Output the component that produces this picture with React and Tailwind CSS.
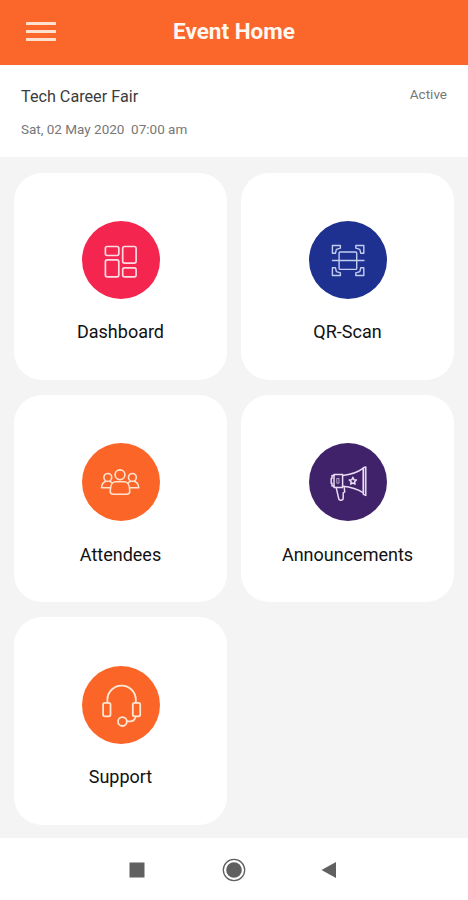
import clsx from "clsx"

function DashboardIcon() {
  return (
    <g strokeWidth="1.7">
      <rect x="23.4" y="25.5" width="13.4" height="9" rx="1.8" />
      <rect x="23.4" y="38.9" width="13.4" height="17" rx="1.8" />
      <rect x="40.7" y="25.5" width="13.4" height="16.6" rx="1.8" />
      <rect x="40.7" y="46.9" width="13.4" height="9" rx="1.8" />
    </g>
  )
}

function ScanIcon() {
  const corner = "M23.4 24.5h8v2.6l-4 1.2-1 4h-3z"
  return (
    <g strokeWidth="1.4" stroke="#c3cdf2">
      <path d={corner} />
      <path d={corner} transform="matrix(-1 0 0 1 78.2 0)" />
      <path d={corner} transform="matrix(1 0 0 -1 0 79)" />
      <path d={corner} transform="matrix(-1 0 0 -1 78.2 79)" />
      <rect x="30.1" y="31" width="17.6" height="17.4" rx="1" />
      <path d="M23.4 39.5h31.6" />
    </g>
  )
}

function PeopleIcon() {
  return (
    <g strokeWidth="1.6" stroke="#ffe3cf">
      <circle cx="38" cy="31.8" r="4.9" />
      <circle cx="25.8" cy="34.4" r="3.9" />
      <circle cx="50.4" cy="34.4" r="3.9" />
      <path d="M33.5 38.8h9c3.1 0 5.3 3.7 5.3 9.5 0 2-1.3 3-3.3 3h-13c-2 0-3.3-1-3.3-3 0-5.8 2.2-9.5 5.3-9.5z" />
      <path d="M28.5 44.7h-9c.2-2.9 1.5-5.2 4-6.1M28 38.6c1 .3 1.6.8 2 1.4" />
      <path d="M47.7 44.7h9c-.2-2.9-1.5-5.2-4-6.1M48.2 38.6c-1 .3-1.6.8-2 1.4" />
    </g>
  )
}

function MegaphoneIcon() {
  return (
    <g strokeWidth="1.5" stroke="#eadcf5">
      <path d="M25 31.4h8.6v13H25z" />
      <path d="M25 32.5h-2v3h-.8v4.8h.8v2.8h2" />
      <path d="M28.2 35.4h1.8v4.8h-1.8z" strokeWidth=".7" />
      <path d="M33.6 32.5c8.3-.7 15.2-3.2 20.8-7.3v24.8c-5.6-3.8-12.5-6-20.8-6.7" />
      <path d="M54.4 24.7l2.4-.8v28.5l-2.4-1z" />
      <path d="M27.2 44.6l2.6 11.4c.4 1.7 4.4 1.5 4.4-.5v-5.6l1.5-1-.4-4.2" />
      <path d="M43.9 34.4l1 2.3 2.5.3-1.8 1.7.4 2.5-2.1-1.2-2.2 1.2.5-2.5-1.9-1.7 2.5-.3z" />
    </g>
  )
}

function HeadsetIcon() {
  return (
    <g strokeWidth="1.8" stroke="#ffe9d6">
      <rect x="21.1" y="36.8" width="7.4" height="13.6" rx="1.8" />
      <rect x="50.8" y="36.8" width="7.4" height="13.6" rx="1.8" />
      <path d="M25.4 36.6v-2.8a14.2 14.2 0 0 1 28.4 0v2.8" />
      <circle cx="40.4" cy="55.6" r="4.4" />
      <path d="M45 55.4h3c3 0 5-1.8 5.6-4.8" />
    </g>
  )
}

const tiles = [
  { label: "Dashboard", color: "bg-[#f4254f]", Icon: DashboardIcon },
  { label: "QR-Scan", color: "bg-[#1f3190]", Icon: ScanIcon },
  { label: "Attendees", color: "bg-[#fb6528]", Icon: PeopleIcon },
  { label: "Announcements", color: "bg-[#3f2269]", Icon: MegaphoneIcon },
  { label: "Support", color: "bg-[#fb6528]", Icon: HeadsetIcon },
]

function Tile({ label, color, Icon }) {
  return (
    <button className="flex h-[207.5px] flex-col items-center rounded-[28px] bg-white pt-[48.5px]">
      <span className={clsx("h-[78px] w-[78px] rounded-full", color)}>
        <svg
          className="h-[78px] w-[78px]"
          viewBox="0 0 78 78"
          fill="none"
          stroke="#ffdbe3"
          strokeLinecap="round"
          strokeLinejoin="round"
        >
          <Icon />
        </svg>
      </span>
      <span className="mt-[21.3px] text-[18px] leading-6 text-[#111]">{label}</span>
    </button>
  )
}

export default function App() {
  return (
    <div className="flex h-[900px] w-[468px] flex-col overflow-hidden bg-[#f4f4f4] font-[Roboto,sans-serif]">
      {/* Header */}
      <header className="grid h-[64.5px] shrink-0 grid-cols-[1fr_auto_1fr] items-center bg-[#fb672b] px-[26px]">
        <button className="mb-[2px] flex w-[29.5px] flex-col gap-[5px]">
          <span className="h-[3px] w-full bg-[#ffdfce]" />
          <span className="h-[3px] w-full bg-[#ffdfce]" />
          <span className="h-[3px] w-full bg-[#ffdfce]" />
        </button>
        <h1 className="mb-[2px] text-[22.5px] leading-7 font-bold text-[#fff8f2]">Event Home</h1>
      </header>

      {/* Event details */}
      <section className="h-[92px] shrink-0 bg-white px-[21px] pt-5">
        <div className="flex items-start justify-between">
          <h2 className="text-[16.2px] leading-6 text-[#3c3c3c]">Tech Career Fair</h2>
          <span className="text-[13.5px] leading-[18px] text-[#777]">Active</span>
        </div>
        <p className="mt-[10px] text-[13.5px] leading-5 whitespace-pre text-[#777]">Sat, 02 May 2020  07:00 am</p>
      </section>

      {/* Menu */}
      <main className="grid flex-1 grid-cols-2 content-start gap-x-[14px] gap-y-[14.8px] px-[14px] pt-4">
        {tiles.map((tile) => (
          <Tile key={tile.label} {...tile} />
        ))}
      </main>

      {/* System navigation */}
      <nav className="flex h-[62px] shrink-0 items-center justify-center gap-[73px] bg-white pt-px">
        <svg className="h-6 w-6" viewBox="0 0 24 24" fill="#606060">
          <rect x="4.5" y="4.5" width="15" height="15" />
        </svg>
        <svg className="h-6 w-6" viewBox="0 0 24 24" fill="#606060">
          <circle cx="12" cy="12" r="10.7" fill="none" stroke="#606060" strokeWidth="1.3" />
          <circle cx="12" cy="12" r="7.8" />
        </svg>
        <svg className="h-6 w-6" viewBox="0 0 24 24" fill="#606060">
          <path d="M2.5 12 17 4v16z" />
        </svg>
      </nav>
    </div>
  )
}
